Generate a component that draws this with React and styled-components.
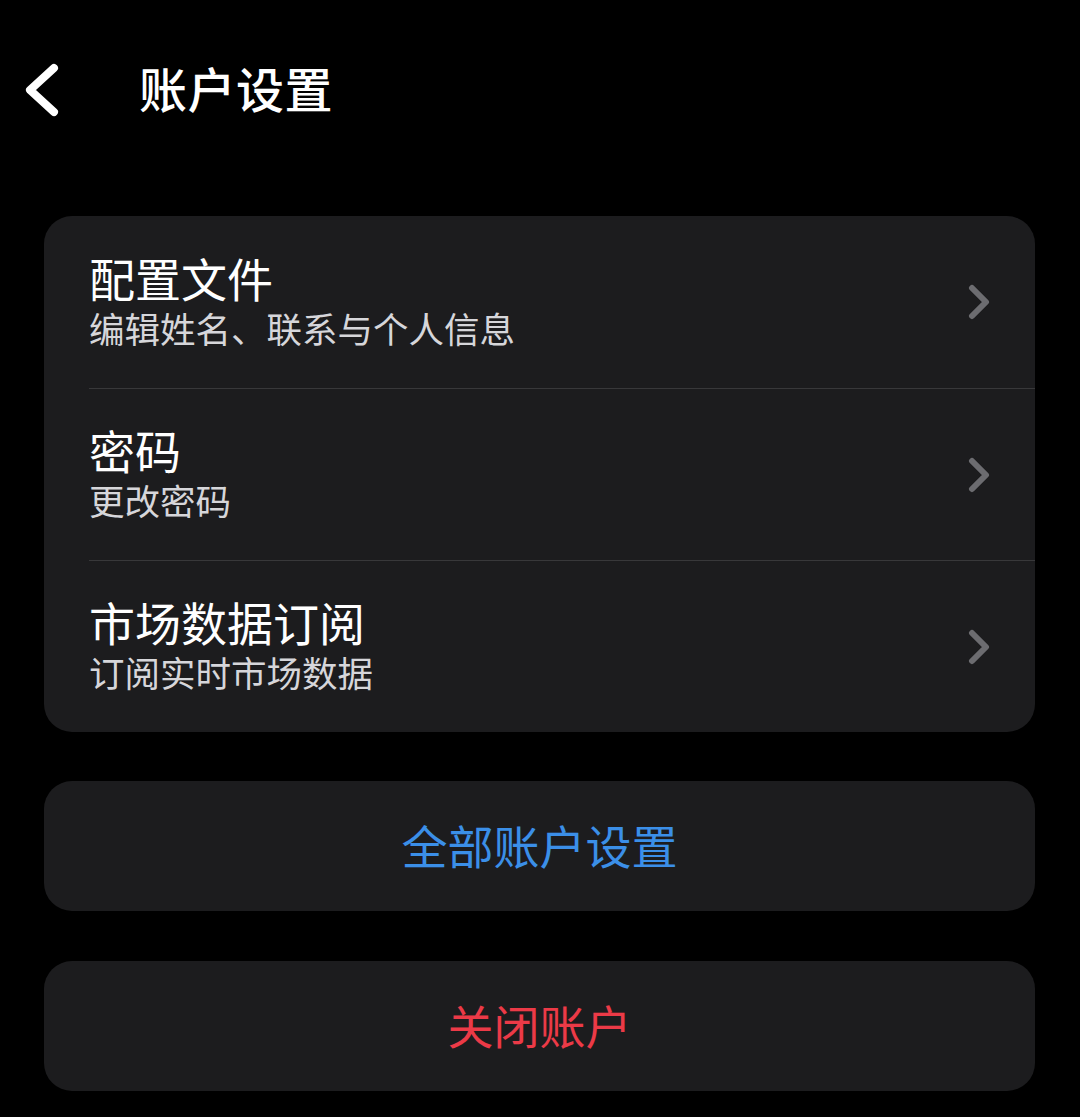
import React from 'react'
import styled, { createGlobalStyle } from 'styled-components'

const GlobalStyle = createGlobalStyle`
  html, body {
    margin: 0;
    padding: 0;
    background: #000;
  }
  body {
    font-family: "Noto Sans CJK SC", "Noto Sans", sans-serif;
    color: #fff;
  }
`

const Page = styled.div`
  width: 1080px;
  min-height: 1117px;
  background: #000;
  box-sizing: border-box;
  padding: 0 45px 0 44px;
  display: flex;
  flex-direction: column;
`

const Header = styled.header`
  height: 180px;
  display: flex;
  align-items: flex-start;
  padding-top: 59px;
  box-sizing: border-box;
  margin-left: -44px;
`

const BackButton = styled.button`
  width: 139px;
  height: 56px;
  padding: 0 0 0 22px;
  margin-top: 3px;
  background: none;
  border: 0;
  display: flex;
  align-items: center;
  cursor: pointer;
`

const Title = styled.h1`
  margin: 0;
  font-size: 48px;
  line-height: 56px;
  font-weight: 500;
  letter-spacing: 0.5px;
`

const Card = styled.section`
  margin-top: 36px;
  background: #1c1c1e;
  border-radius: 28px;
  overflow: hidden;
  display: flex;
  flex-direction: column;
`

const Row = styled.div`
  height: 172px;
  display: flex;
  align-items: center;
  margin-left: 45px;
  padding-right: 44px;
  box-sizing: border-box;
  border-top: ${p => (p.first ? 'none' : '1.5px solid #38383a')};
  cursor: pointer;
`

const RowText = styled.div`
  flex: 1;
  display: flex;
  flex-direction: column;
  padding-bottom: 7px;
`

const RowTitle = styled.div`
  font-size: 46px;
  line-height: 58px;
  color: #fff;
`

const RowSub = styled.div`
  font-size: 35.5px;
  line-height: 44px;
  color: #d6d6da;
`

const ActionButton = styled.button`
  margin-top: ${p => p.gap}px;
  height: 130px;
  width: 100%;
  padding: 0 0 5px;
  border: 0;
  border-radius: 28px;
  background: #1c1c1e;
  color: ${p => p.color};
  font-family: "Noto Sans CJK SC", "Noto Sans", sans-serif;
  font-size: 46px;
  display: flex;
  align-items: center;
  justify-content: center;
  cursor: pointer;
`

const BackIcon = () => (
  <svg width="40" height="56" viewBox="0 0 40 56">
    <path
      d="M32 6 L8 28 L32 50"
      fill="none"
      stroke="#fff"
      strokeWidth="8"
      strokeLinecap="round"
      strokeLinejoin="round"
    />
  </svg>
)

const Chevron = () => (
  <svg width="24" height="36" viewBox="0 0 24 36">
    <path
      d="M5 4 L19 18 L5 32"
      fill="none"
      stroke="#6c6c70"
      strokeWidth="6"
      strokeLinecap="round"
      strokeLinejoin="round"
    />
  </svg>
)

const rows = [
  { title: '配置文件', sub: '编辑姓名、联系与个人信息' },
  { title: '密码', sub: '更改密码' },
  { title: '市场数据订阅', sub: '订阅实时市场数据' },
]

export default function App() {
  return (
    <>
      <GlobalStyle />
      <Page>
        <Header>
          <BackButton aria-label="返回">
            <BackIcon />
          </BackButton>
          <Title>账户设置</Title>
        </Header>
        <Card>
          {rows.map((r, i) => (
            <Row key={r.title} first={i === 0}>
              <RowText>
                <RowTitle>{r.title}</RowTitle>
                <RowSub>{r.sub}</RowSub>
              </RowText>
              <Chevron />
            </Row>
          ))}
        </Card>
        <ActionButton gap={49} color="#3b8fe8">全部账户设置</ActionButton>
        <ActionButton gap={50} color="#ec3a47">关闭账户</ActionButton>
      </Page>
    </>
  )
}
